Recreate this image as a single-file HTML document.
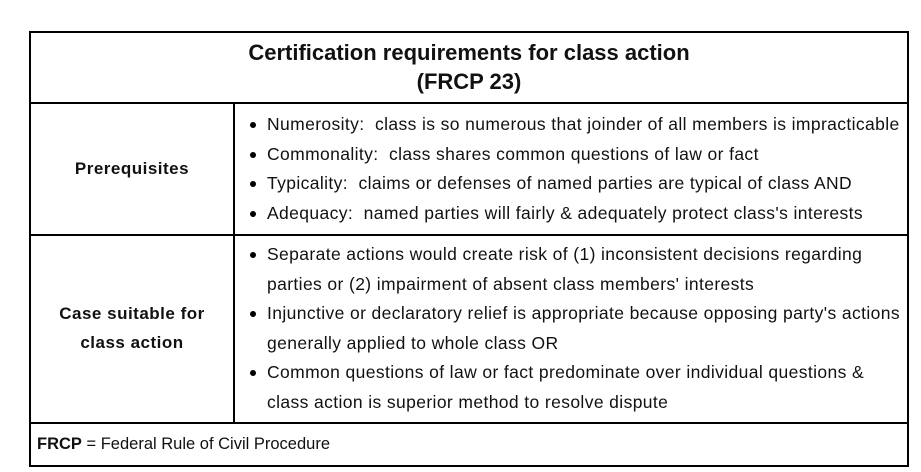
<!DOCTYPE html>
<html><head><style>
body{margin:0;width:921px;height:472px;background:#fff;font-family:"Liberation Sans",Arial,sans-serif;color:#111;position:relative;overflow:hidden}
.l{position:absolute;background:#000}
.t{position:absolute;white-space:nowrap}
.b{font-size:17.5px;letter-spacing:0.38px;line-height:29.5px}
ul{margin:0;padding:0;list-style:none}
li{position:relative;padding-left:0}
li:before{content:"";position:absolute;left:-17px;top:12px;width:6px;height:6px;border-radius:50%;background:#000}
</style></head><body>
<div class="l" style="left:29px;top:31px;width:880px;height:2px"></div>
<div class="l" style="left:29px;top:465px;width:880px;height:2px"></div>
<div class="l" style="left:29px;top:31px;width:2px;height:436px"></div>
<div class="l" style="left:907px;top:31px;width:2px;height:436px"></div>
<div class="l" style="left:29px;top:102px;width:880px;height:2px"></div>
<div class="l" style="left:29px;top:234px;width:880px;height:2px"></div>
<div class="l" style="left:29px;top:422px;width:880px;height:2px"></div>
<div class="l" style="left:233px;top:102px;width:2px;height:322px"></div>
<div class="t" style="left:31px;width:876px;top:38px;text-align:center;font-weight:bold;font-size:22px;line-height:29px">Certification requirements for class action<br>(FRCP 23)</div>
<div class="t" style="left:31px;width:202px;top:154px;text-align:center;font-weight:bold;font-size:17px;letter-spacing:0.5px;line-height:29px">Prerequisites</div>
<div class="t" style="left:31px;width:202px;top:299px;text-align:center;font-weight:bold;font-size:17px;letter-spacing:0.5px;line-height:29px">Case suitable for<br>class action</div>
<ul class="t b" style="left:267px;top:110px">
<li>Numerosity:&nbsp; class is so numerous that joinder of all members is impracticable</li>
<li>Commonality:&nbsp; class shares common questions of law or fact</li>
<li>Typicality:&nbsp; claims or defenses of named parties are typical of class AND</li>
<li>Adequacy:&nbsp; named parties will fairly &amp; adequately protect class's interests</li>
</ul>
<ul class="t b" style="left:267px;top:240px">
<li>Separate actions would create risk of (1) inconsistent decisions regarding<br>parties or (2) impairment of absent class members' interests</li>
<li>Injunctive or declaratory relief is appropriate because opposing party's actions<br>generally applied to whole class OR</li>
<li>Common questions of law or fact predominate over individual questions &amp;<br>class action is superior method to resolve dispute</li>
</ul>
<div class="t" style="left:37px;top:435px;font-size:16.5px"><b>FRCP</b> = Federal Rule of Civil Procedure</div>
</body></html>
